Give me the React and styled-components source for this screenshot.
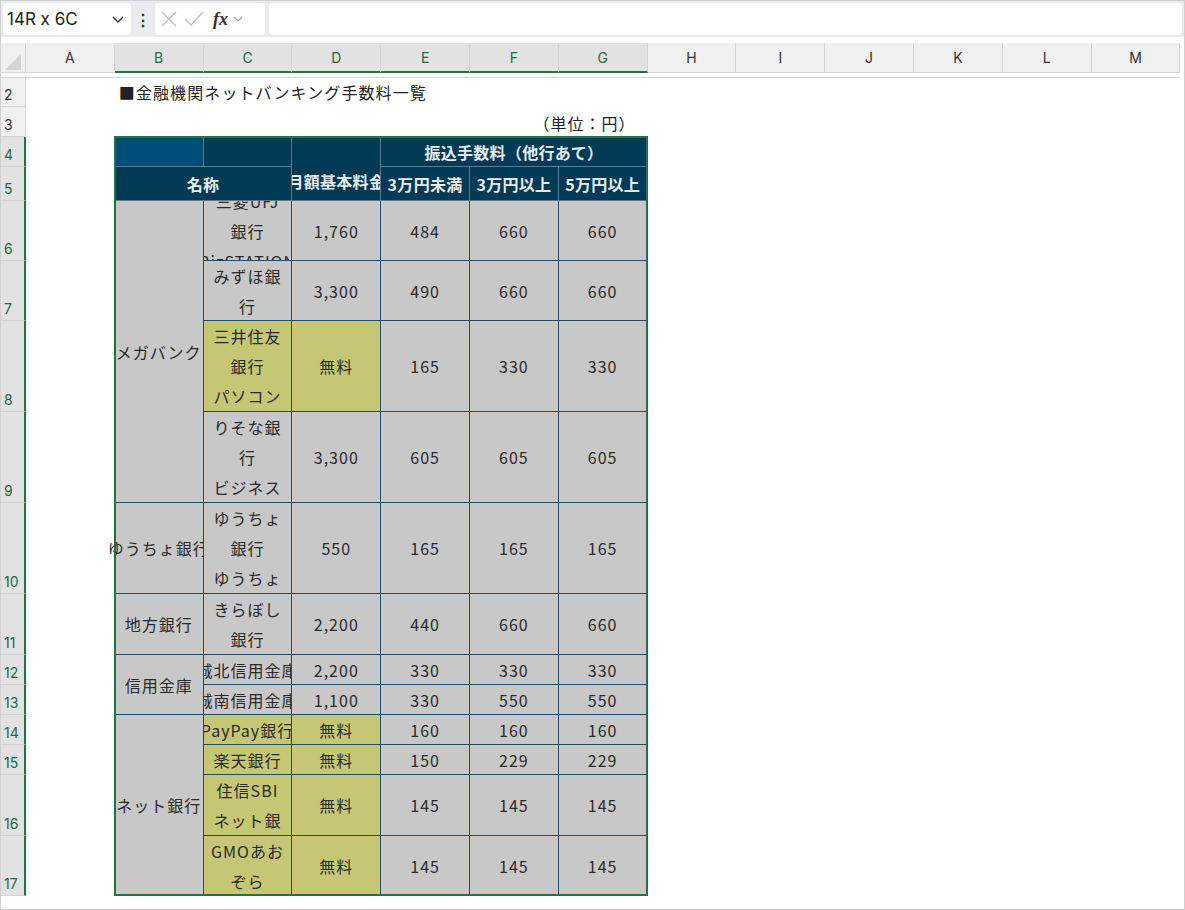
import React from 'react'
import styled, { createGlobalStyle } from 'styled-components'

const GlobalStyle = createGlobalStyle`
  body { margin: 0; background: #fff; font-family: "Noto Sans CJK JP", "Noto Sans", sans-serif; }
`

const COLS = ['A', 'B', 'C', 'D', 'E', 'F', 'G', 'H', 'I', 'J', 'K', 'L', 'M']
const ROWS = [
  { n: 2, h: 29 }, { n: 3, h: 30 }, { n: 4, h: 30 }, { n: 5, h: 34 },
  { n: 6, h: 60 }, { n: 7, h: 60 }, { n: 8, h: 91 }, { n: 9, h: 91 },
  { n: 10, h: 91 }, { n: 11, h: 61 }, { n: 12, h: 30 }, { n: 13, h: 30 },
  { n: 14, h: 30 }, { n: 15, h: 30 }, { n: 16, h: 61 }, { n: 17, h: 60 },
]
const rowIdx = (n) => ROWS.findIndex((r) => r.n === n) + 3
const colIdx = (c) => COLS.indexOf(c) + 2

const G = 'gray'
const Y = 'yellow'
const cells = [
  { c: 'B', r: 6, rs: 4, t: 'メガバンク', f: G, ov: true },
  { c: 'C', r: 6, t: '三菱UFJ\n銀行\nBizSTATION', f: G, wrap: true },
  { c: 'D', r: 6, t: '1,760', f: G },
  { c: 'C', r: 7, t: 'みずほ銀\n行', f: G, wrap: true },
  { c: 'D', r: 7, t: '3,300', f: G },
  { c: 'C', r: 8, t: '三井住友\n銀行\nパソコン', f: Y, wrap: true },
  { c: 'D', r: 8, t: '無料', f: Y },
  { c: 'C', r: 9, t: 'りそな銀\n行\nビジネス', f: G, wrap: true },
  { c: 'D', r: 9, t: '3,300', f: G },
  { c: 'B', r: 10, t: 'ゆうちょ銀行', f: G, ov: true },
  { c: 'C', r: 10, t: 'ゆうちょ\n銀行\nゆうちょ', f: G, wrap: true },
  { c: 'D', r: 10, t: '550', f: G },
  { c: 'B', r: 11, t: '地方銀行', f: G },
  { c: 'C', r: 11, t: 'きらぼし\n銀行', f: G, wrap: true },
  { c: 'D', r: 11, t: '2,200', f: G },
  { c: 'B', r: 12, rs: 2, t: '信用金庫', f: G },
  { c: 'C', r: 12, t: '城北信用金庫', f: G },
  { c: 'D', r: 12, t: '2,200', f: G },
  { c: 'C', r: 13, t: '城南信用金庫', f: G },
  { c: 'D', r: 13, t: '1,100', f: G },
  { c: 'B', r: 14, rs: 4, t: 'ネット銀行', f: G, ov: true },
  { c: 'C', r: 14, t: 'PayPay銀行', f: Y },
  { c: 'D', r: 14, t: '無料', f: Y },
  { c: 'C', r: 15, t: '楽天銀行', f: Y },
  { c: 'D', r: 15, t: '無料', f: Y },
  { c: 'C', r: 16, t: '住信SBI\nネット銀', f: Y, wrap: true },
  { c: 'D', r: 16, t: '無料', f: Y },
  { c: 'C', r: 17, t: 'GMOあお\nぞら', f: Y, wrap: true },
  { c: 'D', r: 17, t: '無料', f: Y },
]
const fees = {
  6: [484, 660, 660], 7: [490, 660, 660], 8: [165, 330, 330], 9: [605, 605, 605],
  10: [165, 165, 165], 11: [440, 660, 660], 12: [330, 330, 330], 13: [330, 550, 550],
  14: [160, 160, 160], 15: [150, 229, 229], 16: [145, 145, 145], 17: [145, 145, 145],
}
Object.entries(fees).forEach(([r, v]) => {
  v.forEach((x, i) => cells.push({ c: ['E', 'F', 'G'][i], r: +r, t: String(x), f: G }))
})

const fills = { gray: '#c8c8c8', yellow: '#c6c774', dark: '#003a57', light: '#004e78' }
const selCols = ['B', 'C', 'D', 'E', 'F', 'G']

export default function App() {
  return (
    <>
      <GlobalStyle />
      <Window>
        <Toolbar>
          <NameBox>
            <span>14R x 6C</span>
            <svg width="14" height="14" viewBox="0 0 14 14"><path d="M2 5l5 5 5-5" fill="none" stroke="#333" strokeWidth="1.4" /></svg>
          </NameBox>
          <Dots>⋮</Dots>
          <FxBox>
            <svg width="20" height="20" viewBox="0 0 20 20"><path d="M3 3l14 14M17 3L3 17" stroke="#bbb" strokeWidth="1.3" /></svg>
            <svg width="22" height="20" viewBox="0 0 22 20"><path d="M2 10l6 6L20 3" fill="none" stroke="#bbb" strokeWidth="1.3" /></svg>
            <Fx>fx</Fx>
            <svg width="12" height="12" viewBox="0 0 12 12"><path d="M2 4l4 4 4-4" fill="none" stroke="#999" strokeWidth="1.2" /></svg>
          </FxBox>
          <FormulaBar />
        </Toolbar>
        <Sheet>
          <Corner><svg width="22" height="22" viewBox="0 0 22 22"><path d="M20 4v16H4z" fill="#d4d4d4" /></svg></Corner>
          {COLS.map((c) => (
            <ColHead key={c} $sel={selCols.includes(c)} $col={colIdx(c)}>{c}</ColHead>
          ))}
          <HiddenRow />
          {ROWS.map((r) => (
            <RowHead key={r.n} $sel={r.n >= 4} $row={rowIdx(r.n)}>{r.n}</RowHead>
          ))}
          <Title $row={rowIdx(2)}>■金融機関ネットバンキング手数料一覧</Title>
          <Unit $row={rowIdx(3)}>（単位：円）</Unit>

          <Cell $fill={fills.light} $head $row={rowIdx(4)} $col={colIdx('B')} />
          <Cell $fill={fills.dark} $head $row={rowIdx(4)} $col={colIdx('C')} />
          <Cell $fill={fills.dark} $head $row={rowIdx(5)} $col="3 / 5">名称</Cell>
          <Cell $fill={fills.dark} $head $bottom $row={`${rowIdx(4)} / span 2`} $col={colIdx('D')}>月額基本料金</Cell>
          <Cell $fill={fills.dark} $head $row={rowIdx(4)} $col="6 / 9">振込手数料（他行あて）</Cell>
          {['3万円未満', '3万円以上', '5万円以上'].map((t, i) => (
            <Cell key={t} $fill={fills.dark} $head $row={rowIdx(5)} $col={colIdx(['E', 'F', 'G'][i])}>{t}</Cell>
          ))}
          {cells.map((x, i) => (
            <Cell key={i} $fill={fills[x.f]} $wrap={x.wrap} $ov={x.ov}
              $row={`${rowIdx(x.r)} / span ${x.rs || 1}`} $col={colIdx(x.c)}>
              {x.t}
            </Cell>
          ))}
          <Selection $row={`${rowIdx(4)} / ${rowIdx(17) + 1}`} />
        </Sheet>
      </Window>
    </>
  )
}

const Window = styled.div`
  width: 1183px;
  height: 908px;
  border: 1px solid #d0d0d0;
  overflow: hidden;
  background: #fff;
`

const Toolbar = styled.div`
  display: flex;
  align-items: center;
  gap: 4px;
  height: 36px;
  padding: 0 2px;
  background: #e9ebee;
`

const NameBox = styled.div`
  width: 118px;
  height: 32px;
  display: flex;
  align-items: center;
  justify-content: space-between;
  padding: 0 6px 0 4px;
  background: #fff;
  border-radius: 4px;
  font-family: "Inter", "Liberation Sans", sans-serif;
  font-size: 17px;
  color: #222;
`

const Dots = styled.div`
  width: 16px;
  text-align: center;
  font-weight: bold;
  color: #333;
  font-size: 16px;
`

const FxBox = styled.div`
  width: 102px;
  height: 32px;
  display: flex;
  align-items: center;
  gap: 4px;
  padding: 0 4px;
  background: #fff;
  border-radius: 4px;
`

const Fx = styled.span`
  font-family: "Liberation Serif", serif;
  font-style: italic;
  font-weight: bold;
  font-size: 18px;
  color: #333;
  margin-left: 4px;
`

const FormulaBar = styled.div`
  flex: 1;
  height: 32px;
  background: #fff;
  border-radius: 4px;
`

const Sheet = styled.div`
  display: grid;
  grid-template-columns: 25px repeat(13, 88.8px);
  grid-template-rows: 30px 5px ${ROWS.map((r) => r.h + 'px').join(' ')};
  margin-top: 6px;
`

const Corner = styled.div`
  grid-row: 1;
  grid-column: 1;
  background: #f0f0f0;
  border-right: 1px solid #d4d4d4;
  border-bottom: 1px solid #d4d4d4;
  display: flex;
  align-items: flex-end;
`

const ColHead = styled.div`
  grid-row: 1;
  grid-column: ${(p) => p.$col};
  display: flex;
  align-items: center;
  justify-content: center;
  font-family: "Inter", "Liberation Sans", sans-serif;
  font-size: 14px;
  color: ${(p) => (p.$sel ? '#1e6b40' : '#333')};
  background: ${(p) => (p.$sel ? '#e2e2e2' : '#f0f0f0')};
  border-right: 1px solid #d4d4d4;
  border-bottom: ${(p) => (p.$sel ? '2px solid #217346' : '1px solid #d4d4d4')};
`

const HiddenRow = styled.div`
  grid-row: 2;
  grid-column: 1 / -1;
  border-bottom: 1px solid #d4d4d4;
`

const RowHead = styled.div`
  grid-row: ${(p) => p.$row};
  grid-column: 1;
  display: flex;
  align-items: flex-end;
  padding: 0 0 3px 3px;
  font-family: "Inter", "Liberation Sans", sans-serif;
  font-size: 14px;
  color: ${(p) => (p.$sel ? '#1e6b40' : '#333')};
  background: ${(p) => (p.$sel ? '#e2e2e2' : '#f0f0f0')};
  border-bottom: 1px solid #d4d4d4;
  border-right: ${(p) => (p.$sel ? '2px solid #217346' : '1px solid #d4d4d4')};
`

const Title = styled.div`
  grid-row: ${(p) => p.$row};
  grid-column: 3 / 9;
  display: flex;
  align-items: flex-end;
  padding: 0 0 3px 4px;
  font-size: 16px;
  letter-spacing: 1.1px;
  color: #222;
`

const Unit = styled.div`
  grid-row: ${(p) => p.$row};
  grid-column: 3 / 9;
  display: flex;
  align-items: flex-end;
  justify-content: flex-end;
  padding: 0 12px 2px 0;
  font-size: 16px;
  letter-spacing: 1px;
  color: #222;
`

const Cell = styled.div`
  grid-row: ${(p) => p.$row};
  grid-column: ${(p) => p.$col};
  display: flex;
  align-items: ${(p) => (p.$bottom ? 'flex-end' : 'center')};
  justify-content: center;
  text-align: center;
  padding-bottom: ${(p) => (p.$bottom ? '4px' : '0')};
  background: ${(p) => p.$fill};
  border-right: 1px solid ${(p) => (p.$head ? '#5d7a8c' : '#1f4e6a')};
  border-bottom: 1px solid ${(p) => (p.$head ? '#5d7a8c' : '#1f4e6a')};
  font-size: 16px;
  line-height: 30px;
  letter-spacing: ${(p) => (p.$head ? '0.3px' : '1px')};
  font-weight: ${(p) => (p.$head ? 'bold' : 'normal')};
  color: ${(p) => (p.$head ? '#e8ecef' : '#2a2a2a')};
  white-space: ${(p) => (p.$wrap ? 'pre' : 'nowrap')};
  overflow: ${(p) => (p.$ov ? 'visible' : 'hidden')};
  min-width: 0;
`

const Selection = styled.div`
  grid-row: ${(p) => p.$row};
  grid-column: 3 / 9;
  border: 2px solid #217346;
  margin: -1px 0 0 -1px;
  pointer-events: none;
  z-index: 2;
`
